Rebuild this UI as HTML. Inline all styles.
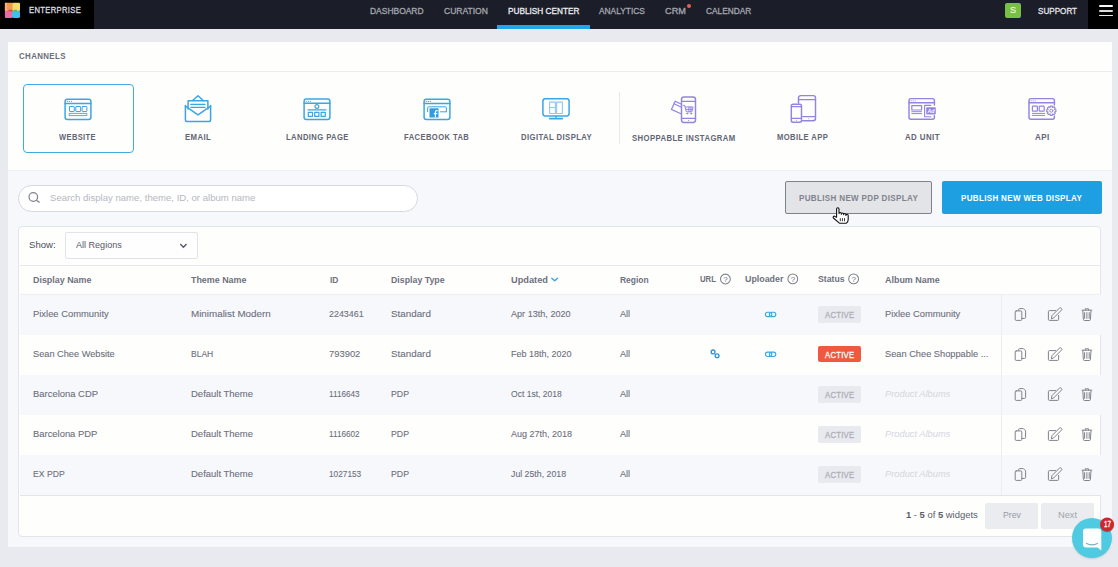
<!DOCTYPE html>
<html><head><meta charset="utf-8">
<style>
*{margin:0;padding:0;box-sizing:border-box}
html,body{width:1118px;height:567px;overflow:hidden;background:#e9e9f0;font-family:"Liberation Sans",sans-serif}
.a{position:absolute}
.t{position:absolute;white-space:nowrap;line-height:1;transform-origin:0 0}
svg{position:absolute;overflow:visible}
</style></head><body>
<!-- header -->
<div class="a" style="left:0;top:0;width:1118px;height:29px;background:#1b1e29"></div>
<div class="a" style="left:0;top:0;width:94px;height:29px;background:#000"></div>
<div class="a" style="left:1088px;top:0;width:30px;height:29px;background:#000"></div>
<!-- logo -->
<svg style="left:0;top:0" width="30" height="29">
 <rect x="4.9" y="2.8" width="8.4" height="8.4" rx="1" fill="#f2994a"/>
 <rect x="4.9" y="2.8" width="2" height="8.4" fill="#f6b088"/>
 <rect x="12.6" y="2.8" width="7.4" height="8.2" rx="1" fill="#f4dd6a"/>
 <rect x="4.9" y="10.8" width="7.6" height="7.1" rx="1" fill="#e96aa6"/>
 <rect x="12" y="10.8" width="8" height="7.1" rx="1.4" fill="#40bfe9"/>
 <rect x="8.6" y="9.8" width="3.6" height="1.6" fill="#e2403f"/>
 <rect x="13.6" y="9.8" width="3.4" height="1.6" fill="#4fb867"/>
</svg>
<div class="a" style="left:497px;top:25px;width:93px;height:3.5px;background:#23a6e6"></div>
<div class="a" style="left:686.5px;top:3.8px;width:4.2px;height:4.2px;border-radius:50%;background:#ef5e4c"></div>
<div class="a" style="left:1005px;top:3px;width:16px;height:15px;border-radius:2px;background:#78bf44"></div>
<span class="t" style="left:1010.1px;top:6.2px;font-size:9.2px;color:#e8f3de;-webkit-text-stroke:.2px #e8f3de">S</span>
<div class="a" style="left:1099px;top:4.9px;width:14.4px;height:2.2px;border-radius:1px;background:#f6f6f6"></div>
<div class="a" style="left:1099px;top:10px;width:14.4px;height:1.8px;border-radius:1px;background:#dcdcdc"></div>
<div class="a" style="left:1099px;top:14.8px;width:14.4px;height:1.6px;border-radius:1px;background:#ececec"></div>

<!-- outer card -->
<div class="a" style="left:8px;top:42px;width:1104px;height:505px;background:#f7f8fb"></div>
<div class="a" style="left:8px;top:42px;width:1104px;height:128px;background:#fefefd"></div>
<div class="a" style="left:8px;top:169.6px;width:1104px;height:1px;background:#eff0f4"></div>
<div class="a" style="left:8px;top:70.5px;width:1104px;height:1px;background:#eceef3"></div>
<div class="a" style="left:22.7px;top:83.8px;width:111.3px;height:69.2px;border:1.8px solid #42a9e2;border-radius:4px"></div>
<div class="a" style="left:619px;top:92px;width:1px;height:52px;background:#e8e9ef"></div>


<!-- search -->
<div class="a" style="left:18.4px;top:185.2px;width:399.2px;height:26.5px;border:1px solid #d6d8e0;border-radius:14px;background:#fff"></div>
<svg style="left:0;top:0" width="1" height="1"><circle cx="33.3" cy="197" r="4.3" fill="none" stroke="#80838e" stroke-width="1.2"/><line x1="36.4" y1="200.2" x2="39.6" y2="202.6" stroke="#80838e" stroke-width="1.3"/></svg>
<!-- buttons -->
<div class="a" style="left:785px;top:181.4px;width:147px;height:32.2px;border:1px solid #7f828b;border-radius:2px;background:#e3e4e8"></div>
<div class="a" style="left:942.2px;top:181.4px;width:160px;height:32.2px;border-radius:2px;background:#1e9fe2"></div>

<!-- table card -->
<div class="a" style="left:18px;top:225.8px;width:1083.4px;height:310.9px;border:1px solid #e3e5eb;border-radius:4px;background:#fefefd"></div>
<div class="a" style="left:19.5px;top:265px;width:1081px;height:1px;background:#e6e8ed"></div>
<div class="a" style="left:65px;top:232px;width:132.6px;height:26.8px;border:1px solid #e1e3e8;border-radius:2px;background:#fefefe"></div>
<svg style="left:0;top:0" width="1" height="1"><polyline points="180.3,244 183.4,247.2 186.5,244" fill="none" stroke="#555965" stroke-width="1.4"/></svg>
<div class="a" style="left:19.5px;top:294.5px;width:1081px;height:40px;background:#f7f8fb"></div>
<div class="a" style="left:19.5px;top:374.5px;width:1081px;height:40px;background:#f7f8fb"></div>
<div class="a" style="left:19.5px;top:454.5px;width:1081px;height:40.5px;background:#f7f8fb"></div>
<div class="a" style="left:19.5px;top:294px;width:1081px;height:1px;background:#edeff3"></div>
<div class="a" style="left:19.5px;top:495px;width:1081px;height:1px;background:#e3e5ea"></div>
<div class="a" style="left:1001px;top:294px;width:1px;height:201px;background:#eceef2"></div>
<!-- badges -->
<div class="a" style="left:818.2px;top:306.3px;width:42.5px;height:16.3px;border-radius:2px;background:#e9eaef"></div>
<div class="a" style="left:818.2px;top:345.9px;width:42.5px;height:16.5px;border-radius:2px;background:#f0593d"></div>
<div class="a" style="left:818.2px;top:386.2px;width:42.5px;height:16.4px;border-radius:2px;background:#e9eaef"></div>
<div class="a" style="left:818.2px;top:426.2px;width:42.5px;height:16.4px;border-radius:2px;background:#e9eaef"></div>
<div class="a" style="left:818.2px;top:466.2px;width:42.5px;height:16.4px;border-radius:2px;background:#e9eaef"></div>
<!-- footer -->
<div class="a" style="left:985.2px;top:503.3px;width:52.6px;height:25.4px;border-radius:2px;background:#ebecf0"></div>
<div class="a" style="left:1040.9px;top:503.3px;width:53px;height:25.4px;border-radius:2px;background:#ebecf0"></div>

<!-- ROWICONS -->
<svg style="left:0;top:0" width="1118" height="567" fill="none" stroke="#80838d" stroke-width="1" stroke-linejoin="round" stroke-linecap="round">
<g transform="translate(0 0)">
 <path d="M1018.6 310.4 V309.6 a1 1 0 0 1 1 -1 H1023.4 L1025.6 310.8 V317.4 a1 1 0 0 1 -1 1 H1021.8"/>
 <path d="M1016.2 310.9 H1020.8 a1 1 0 0 1 1 1 V319.4 a1 1 0 0 1 -1 1 H1016.2 a1 1 0 0 1 -1 -1 V311.9 a1 1 0 0 1 1 -1 Z"/>
 <path d="M1055.6 310.6 H1049.4 a1 1 0 0 0 -1 1 V319.4 a1 1 0 0 0 1 1 H1057.6 a1 1 0 0 0 1 -1 V315.4"/>
 <path d="M1051.4 318.6 L1052 315.6 L1059.6 308 a1 1 0 0 1 1.4 0 L1061.6 308.6 a1 1 0 0 1 0 1.4 L1054 317.6 Z"/>
 <path d="M1082 310.2 H1091.8 M1085.2 310.2 V308.8 H1088.6 V310.2 M1082.8 310.6 L1083.4 319.6 a1 1 0 0 0 1 .9 H1089.4 a1 1 0 0 0 1 -.9 L1091 310.6 M1084.6 312.6 V318.4 M1086.9 312.6 V318.4 M1089.2 312.6 V318.4"/>
</g>
<g transform="translate(0 40)">
 <path d="M1018.6 310.4 V309.6 a1 1 0 0 1 1 -1 H1023.4 L1025.6 310.8 V317.4 a1 1 0 0 1 -1 1 H1021.8"/>
 <path d="M1016.2 310.9 H1020.8 a1 1 0 0 1 1 1 V319.4 a1 1 0 0 1 -1 1 H1016.2 a1 1 0 0 1 -1 -1 V311.9 a1 1 0 0 1 1 -1 Z"/>
 <path d="M1055.6 310.6 H1049.4 a1 1 0 0 0 -1 1 V319.4 a1 1 0 0 0 1 1 H1057.6 a1 1 0 0 0 1 -1 V315.4"/>
 <path d="M1051.4 318.6 L1052 315.6 L1059.6 308 a1 1 0 0 1 1.4 0 L1061.6 308.6 a1 1 0 0 1 0 1.4 L1054 317.6 Z"/>
 <path d="M1082 310.2 H1091.8 M1085.2 310.2 V308.8 H1088.6 V310.2 M1082.8 310.6 L1083.4 319.6 a1 1 0 0 0 1 .9 H1089.4 a1 1 0 0 0 1 -.9 L1091 310.6 M1084.6 312.6 V318.4 M1086.9 312.6 V318.4 M1089.2 312.6 V318.4"/>
</g>
<g transform="translate(0 80)">
 <path d="M1018.6 310.4 V309.6 a1 1 0 0 1 1 -1 H1023.4 L1025.6 310.8 V317.4 a1 1 0 0 1 -1 1 H1021.8"/>
 <path d="M1016.2 310.9 H1020.8 a1 1 0 0 1 1 1 V319.4 a1 1 0 0 1 -1 1 H1016.2 a1 1 0 0 1 -1 -1 V311.9 a1 1 0 0 1 1 -1 Z"/>
 <path d="M1055.6 310.6 H1049.4 a1 1 0 0 0 -1 1 V319.4 a1 1 0 0 0 1 1 H1057.6 a1 1 0 0 0 1 -1 V315.4"/>
 <path d="M1051.4 318.6 L1052 315.6 L1059.6 308 a1 1 0 0 1 1.4 0 L1061.6 308.6 a1 1 0 0 1 0 1.4 L1054 317.6 Z"/>
 <path d="M1082 310.2 H1091.8 M1085.2 310.2 V308.8 H1088.6 V310.2 M1082.8 310.6 L1083.4 319.6 a1 1 0 0 0 1 .9 H1089.4 a1 1 0 0 0 1 -.9 L1091 310.6 M1084.6 312.6 V318.4 M1086.9 312.6 V318.4 M1089.2 312.6 V318.4"/>
</g>
<g transform="translate(0 120)">
 <path d="M1018.6 310.4 V309.6 a1 1 0 0 1 1 -1 H1023.4 L1025.6 310.8 V317.4 a1 1 0 0 1 -1 1 H1021.8"/>
 <path d="M1016.2 310.9 H1020.8 a1 1 0 0 1 1 1 V319.4 a1 1 0 0 1 -1 1 H1016.2 a1 1 0 0 1 -1 -1 V311.9 a1 1 0 0 1 1 -1 Z"/>
 <path d="M1055.6 310.6 H1049.4 a1 1 0 0 0 -1 1 V319.4 a1 1 0 0 0 1 1 H1057.6 a1 1 0 0 0 1 -1 V315.4"/>
 <path d="M1051.4 318.6 L1052 315.6 L1059.6 308 a1 1 0 0 1 1.4 0 L1061.6 308.6 a1 1 0 0 1 0 1.4 L1054 317.6 Z"/>
 <path d="M1082 310.2 H1091.8 M1085.2 310.2 V308.8 H1088.6 V310.2 M1082.8 310.6 L1083.4 319.6 a1 1 0 0 0 1 .9 H1089.4 a1 1 0 0 0 1 -.9 L1091 310.6 M1084.6 312.6 V318.4 M1086.9 312.6 V318.4 M1089.2 312.6 V318.4"/>
</g>
<g transform="translate(0 160)">
 <path d="M1018.6 310.4 V309.6 a1 1 0 0 1 1 -1 H1023.4 L1025.6 310.8 V317.4 a1 1 0 0 1 -1 1 H1021.8"/>
 <path d="M1016.2 310.9 H1020.8 a1 1 0 0 1 1 1 V319.4 a1 1 0 0 1 -1 1 H1016.2 a1 1 0 0 1 -1 -1 V311.9 a1 1 0 0 1 1 -1 Z"/>
 <path d="M1055.6 310.6 H1049.4 a1 1 0 0 0 -1 1 V319.4 a1 1 0 0 0 1 1 H1057.6 a1 1 0 0 0 1 -1 V315.4"/>
 <path d="M1051.4 318.6 L1052 315.6 L1059.6 308 a1 1 0 0 1 1.4 0 L1061.6 308.6 a1 1 0 0 1 0 1.4 L1054 317.6 Z"/>
 <path d="M1082 310.2 H1091.8 M1085.2 310.2 V308.8 H1088.6 V310.2 M1082.8 310.6 L1083.4 319.6 a1 1 0 0 0 1 .9 H1089.4 a1 1 0 0 0 1 -.9 L1091 310.6 M1084.6 312.6 V318.4 M1086.9 312.6 V318.4 M1089.2 312.6 V318.4"/>
</g>
</svg>

<!-- ICONS -->
<svg style="left:0;top:0" width="1118" height="567" fill="none" stroke-linecap="round" stroke-linejoin="round">
<!-- WEBSITE -->
<g stroke="#3ba6e2" stroke-width="1.5">
 <rect x="65.1" y="99.2" width="25.8" height="20.2" rx="2.2"/>
 <line x1="65.1" y1="103.4" x2="90.9" y2="103.4"/>
 <rect x="69.5" y="106.5" width="4.8" height="5" rx=".5" stroke-width="1"/>
 <rect x="75.8" y="106.5" width="4.8" height="5" rx=".5" stroke-width="1"/>
 <rect x="82.1" y="106.5" width="4.8" height="5" rx=".5" stroke-width="1"/>
 <rect x="69.5" y="113.4" width="17.4" height="2.2" stroke-width=".9"/>
</g>
<g fill="#3ba6e2"><circle cx="67.6" cy="101.3" r=".6"/><circle cx="69.6" cy="101.3" r=".6"/><circle cx="71.6" cy="101.3" r=".6"/></g>
<!-- EMAIL -->
<g stroke="#3ba6e2" stroke-width="1.5">
 <path d="M185.4 105.5 V119.8 a1.8 1.8 0 0 0 1.8 1.8 H208.8 a1.8 1.8 0 0 0 1.8 -1.8 V105.5"/>
 <path d="M185.4 106.2 L198 114.8 L210.6 106.2"/>
 <path d="M188.1 109 V100.8 H207.9 V109"/>
 <path d="M192.6 100.5 L198 95.8 L203.2 100.5"/>
 <line x1="190.8" y1="104.4" x2="205" y2="104.4" stroke-width="1.1"/>
 <line x1="190.8" y1="107.4" x2="205" y2="107.4" stroke-width="1.1"/>
</g>
<!-- LANDING PAGE -->
<g stroke="#3ba6e2" stroke-width="1.5">
 <rect x="304.1" y="99" width="25.8" height="20.4" rx="2.2"/>
 <line x1="304.1" y1="103.3" x2="329.9" y2="103.3"/>
 <circle cx="316.9" cy="106.5" r="1.9" stroke-width="1.2"/>
 <line x1="308" y1="109.9" x2="326" y2="109.9" stroke-width="1.1"/>
 <rect x="308.3" y="112.4" width="4.2" height="4" stroke-width="1.2"/>
 <rect x="314.7" y="112.4" width="4.2" height="4" stroke-width="1.2"/>
 <rect x="321.1" y="112.4" width="4.2" height="4" stroke-width="1.2"/>
</g>
<g fill="#3ba6e2"><circle cx="306.3" cy="101.3" r=".6"/><circle cx="308.3" cy="101.3" r=".6"/><circle cx="310.3" cy="101.3" r=".6"/></g>
<!-- FACEBOOK TAB -->
<g stroke="#3ba6e2" stroke-width="1.5">
 <rect x="424.1" y="99.2" width="25.8" height="20.2" rx="2.2"/>
 <line x1="424.1" y1="103.5" x2="449.9" y2="103.5"/>
 <path d="M427.6 111.6 V107.8 a1 1 0 0 1 1 -1 H445.4 a1 1 0 0 1 1 1 V111.6" stroke-width="1"/>
 <line x1="440.5" y1="111.8" x2="446.4" y2="111.8" stroke-width="1"/>
</g>
<g fill="#3ba6e2"><circle cx="426.3" cy="101.4" r=".6"/><circle cx="428.3" cy="101.4" r=".6"/><circle cx="430.3" cy="101.4" r=".6"/>
 <rect x="429.5" y="108.3" width="9" height="9.2" fill="#2f9ce0"/></g>
<path d="M435.4 117.6 V112 a1.4 1.4 0 0 1 1.4 -1.4 h.9 M433.8 113.6 h3.6" stroke="#fff" stroke-width="1.2" stroke-linecap="butt"/>
<!-- DIGITAL DISPLAY -->
<g stroke="#3ba6e2" stroke-width="1.5">
 <rect x="542.9" y="98.8" width="26.2" height="17.2" rx="2.4"/>
 <line x1="549.6" y1="118.6" x2="562.4" y2="118.6" stroke-width="1.6"/>
 <line x1="556" y1="116.4" x2="556" y2="118.2" stroke-width="1.3"/>
</g>
<g stroke="#8cccef" stroke-width="1.1">
 <rect x="549.6" y="102.1" width="5.8" height="5.4"/>
 <rect x="549.6" y="107.5" width="5.8" height="6"/>
 <rect x="556.6" y="102.1" width="5.8" height="11.4"/>
</g>
<!-- SHOPPABLE -->
<g stroke="#9384e0" stroke-width="1.45">
 <rect x="681.5" y="97" width="14" height="25.5" rx="2.4"/>
 <line x1="681.5" y1="101.4" x2="695.5" y2="101.4" stroke-width="1.1"/>
 <line x1="681.5" y1="118.4" x2="695.5" y2="118.4" stroke-width="1.1"/>
 <path d="M680.9 104 L675.2 101.2 L671.4 109.4 L680.9 113.8" stroke-width="1.2"/>
 <line x1="674" y1="103.8" x2="680.9" y2="107.1" stroke-width="1.1"/>
 <path d="M683.2 105.4 h1.5 l1.6 6.4 h5.6 l1.2 -4.8 h-7.9 M685.9 109.4 h6.8 M688.9 107 v4.8 M690.9 107 v4.8" stroke-width="1"/>
 <circle cx="687.2" cy="113.6" r=".55" stroke-width="1"/><circle cx="691.2" cy="113.6" r=".55" stroke-width="1"/>
</g>
<circle cx="688.5" cy="120.5" r=".6" fill="#9384e0"/>
<!-- MOBILE APP -->
<g stroke="#9384e0" stroke-width="1.45">
 <path d="M798.5 103 V97.8 a2.2 2.2 0 0 1 2.2 -2.2 H813.3 a2.2 2.2 0 0 1 2.2 2.2 V118.6 a2.2 2.2 0 0 1 -2.2 2.2 H802.6"/>
 <line x1="798.5" y1="99.6" x2="815.5" y2="99.6" stroke-width="1.1"/>
 <line x1="802.6" y1="116.6" x2="815.5" y2="116.6" stroke-width="1.1"/>
 <rect x="791.3" y="104.2" width="10.2" height="18" rx="1.8"/>
 <line x1="791.3" y1="106.6" x2="801.5" y2="106.6" stroke-width="1.1"/>
 <line x1="791.3" y1="118.4" x2="801.5" y2="118.4" stroke-width="1.1"/>
</g>
<circle cx="808.8" cy="118.8" r=".5" fill="#9384e0"/><circle cx="796.4" cy="120.3" r=".5" fill="#9384e0"/>
<!-- AD UNIT -->
<g stroke="#9384e0" stroke-width="1.45">
 <path d="M934.4 105 V100.6 a2 2 0 0 0 -2 -2 H911 a2 2 0 0 0 -2 2 V117.2 a2 2 0 0 0 2 2 H932.4 a2 2 0 0 0 2 -2 V115.8"/>
 <line x1="909" y1="102.8" x2="934.4" y2="102.8"/>
 <rect x="911.8" y="105.6" width="9.8" height="4.4" stroke-width="1.2"/>
 <line x1="911.8" y1="111.7" x2="921.6" y2="111.7" stroke-width="1"/>
 <line x1="911.8" y1="113.6" x2="921.6" y2="113.6" stroke-width="1"/>
 <path d="M930.8 105.4 H924.6 V116.8 H930.8" stroke-width="1.1"/>
</g>
<g fill="#9384e0"><circle cx="911.2" cy="100.7" r=".55"/><circle cx="913.2" cy="100.7" r=".55"/><circle cx="915.2" cy="100.7" r=".55"/>
 <rect x="926.2" y="107.2" width="9.6" height="7.2" rx=".8"/></g>
<text x="927.4" y="113.1" font-family="Liberation Sans" font-weight="700" font-style="italic" font-size="5.8" fill="#fff" textLength="7" lengthAdjust="spacingAndGlyphs">Ad</text>
<!-- API -->
<g stroke="#9384e0" stroke-width="1.45">
 <path d="M1054.4 105 V100.6 a2 2 0 0 0 -2 -2 H1031 a2 2 0 0 0 -2 2 V117.2 a2 2 0 0 0 2 2 H1052.4 a2 2 0 0 0 2 -2 V116"/>
 <line x1="1029" y1="102.8" x2="1054.4" y2="102.8"/>
 <rect x="1032.4" y="106.2" width="5" height="5" rx=".6" stroke-width="1.2"/>
 <rect x="1039.2" y="106.2" width="5" height="5" rx=".6" stroke-width="1.2"/>
 <line x1="1032.4" y1="113.4" x2="1044.6" y2="113.4" stroke-width="1"/>
 <line x1="1032.4" y1="115.4" x2="1044.6" y2="115.4" stroke-width="1"/>
 <path d="M1055.91 109.77 L1055.91 111.63 L1054.58 111.93 L1054.49 112.14 L1055.22 113.30 L1053.90 114.62 L1052.74 113.89 L1052.53 113.98 L1052.23 115.31 L1050.37 115.31 L1050.07 113.98 L1049.86 113.89 L1048.70 114.62 L1047.38 113.30 L1048.11 112.14 L1048.02 111.93 L1046.69 111.63 L1046.69 109.77 L1048.02 109.47 L1048.11 109.26 L1047.38 108.10 L1048.70 106.78 L1049.86 107.51 L1050.07 107.42 L1050.37 106.09 L1052.23 106.09 L1052.53 107.42 L1052.74 107.51 L1053.90 106.78 L1055.22 108.10 L1054.49 109.26 L1054.58 109.47 Z" stroke-width="1.15" fill="#fdfdfc"/>
 <circle cx="1051.3" cy="110.7" r="1.5" stroke-width="1"/>
</g>
<g fill="#9384e0"><circle cx="1031.2" cy="100.7" r=".55"/><circle cx="1033.2" cy="100.7" r=".55"/><circle cx="1035.2" cy="100.7" r=".55"/></g>

<!-- question circles -->
<g stroke="#7e818b" stroke-width="1.05">
 <circle cx="725.4" cy="279" r="4.9"/><circle cx="792.8" cy="278.9" r="4.9"/><circle cx="853.6" cy="278.9" r="4.9"/>
</g>
<g fill="#6f727d" font-family="Liberation Sans" font-size="8" text-anchor="middle">
 <text x="725.5" y="281.9">?</text><text x="792.9" y="281.8">?</text><text x="853.7" y="281.8">?</text>
</g>
<!-- updated chevron -->
<polyline points="551.8,278.2 554.7,280.8 557.6,278.2" stroke="#3aa3e0" stroke-width="1.4"/>

<!-- link icons -->
<g stroke="#3ea6de" stroke-width="1.1" fill="none">
 <rect x="765.4" y="312.2" width="6.4" height="4.4" rx="2.2"/><rect x="769.4" y="312.2" width="6.4" height="4.4" rx="2.2"/>
 <rect x="765.4" y="352.1" width="6.4" height="4.4" rx="2.2"/><rect x="769.4" y="352.1" width="6.4" height="4.4" rx="2.2"/>
</g>
<g stroke="#2f95d6" stroke-width="1.35" fill="none">
 <circle cx="713.1" cy="351.9" r="1.9"/><circle cx="717.1" cy="355.7" r="1.9"/>
</g>
</svg>



<!-- chat -->
<div class="a" style="left:1072px;top:518.2px;width:40px;height:40px;border-radius:50%;background:#4ecbe1;box-shadow:0 1px 2px rgba(0,0,0,.12)"></div>
<svg style="left:0;top:0" width="1118" height="567">
 <path d="M1086 528.6 H1098.3 a3 3 0 0 1 3 3 V550.6 L1097.6 547.6 H1086 a3 3 0 0 1 -3 -3 V531.6 a3 3 0 0 1 3 -3 Z" fill="#fdfefe"/>
 <path d="M1086.2 543.2 q5.8 3.4 11.6 0" stroke="#7fa9b8" stroke-width="1.1" fill="none"/>
 <circle cx="1107.1" cy="525.2" r="7" fill="#6a2326" opacity=".45"/>
 <circle cx="1107.1" cy="524.4" r="6.9" fill="#d4252b"/>
</svg>
<!-- hand cursor -->
<svg style="left:832.4px;top:207.4px" width="17" height="18">
 <path d="M4.6 10.2 V1.9 a1.2 1.2 0 0 1 2.4 0 V6.6 a1.15 1.15 0 0 1 2.3 0 V7.2 a1.15 1.15 0 0 1 2.3 0 V7.6 a1.15 1.15 0 0 1 2.3 0 V8.4 a1.15 1.15 0 0 1 2.3 0 V12.4 q0 2.2 -1.8 3.8 H7.4 L1.4 11 a1.1 1.1 0 0 1 1.5 -1.6 Z" fill="#fff" stroke="#111" stroke-width="1.1" stroke-linejoin="round"/>
 <path d="M8.3 11.2 V14.2 M10.4 11.2 V14.2 M12.5 11.2 V14.2" stroke="#222" stroke-width="0.9"/>
</svg>
<span class="t" style="left:28.80px;top:6.06px;font-size:8.43px;font-weight:400;color:#dcdce0;transform:scaleX(0.9031);-webkit-text-stroke:0.3px #dcdce0;letter-spacing:0.4px;">ENTERPRISE</span>
<span class="t" style="left:369.80px;top:6.59px;font-size:8.87px;font-weight:400;color:#a4a6ae;transform:scaleX(0.9547);-webkit-text-stroke:0.3px #a4a6ae;">DASHBOARD</span>
<span class="t" style="left:443.50px;top:6.59px;font-size:8.87px;font-weight:400;color:#a4a6ae;transform:scaleX(0.9622);-webkit-text-stroke:0.3px #a4a6ae;">CURATION</span>
<span class="t" style="left:508.00px;top:6.59px;font-size:8.87px;font-weight:400;color:#ececf0;transform:scaleX(0.9293);-webkit-text-stroke:0.3px #ececf0;">PUBLISH CENTER</span>
<span class="t" style="left:599.10px;top:6.59px;font-size:8.87px;font-weight:400;color:#a4a6ae;transform:scaleX(0.9432);-webkit-text-stroke:0.3px #a4a6ae;">ANALYTICS</span>
<span class="t" style="left:665.00px;top:6.59px;font-size:8.87px;font-weight:400;color:#a4a6ae;transform:scaleX(1.0356);-webkit-text-stroke:0.3px #a4a6ae;">CRM</span>
<span class="t" style="left:705.60px;top:6.59px;font-size:8.87px;font-weight:400;color:#a4a6ae;transform:scaleX(0.9363);-webkit-text-stroke:0.3px #a4a6ae;">CALENDAR</span>
<span class="t" style="left:1037.70px;top:6.99px;font-size:8.87px;font-weight:400;color:#e4e4e8;transform:scaleX(0.9155);-webkit-text-stroke:0.3px #e4e4e8;">SUPPORT</span>
<span class="t" style="left:18.80px;top:52.34px;font-size:8.58px;font-weight:700;color:#6a6e7a;transform:scaleX(0.9199);letter-spacing:0.4px;">CHANNELS</span>
<span class="t" style="left:59.30px;top:133.79px;font-size:8.28px;font-weight:700;color:#626673;transform:scaleX(0.9059);letter-spacing:0.45px;">WEBSITE</span>
<span class="t" style="left:185.00px;top:133.79px;font-size:8.28px;font-weight:700;color:#626673;transform:scaleX(0.9394);letter-spacing:0.45px;">EMAIL</span>
<span class="t" style="left:285.90px;top:133.79px;font-size:8.28px;font-weight:700;color:#626673;transform:scaleX(0.9224);letter-spacing:0.45px;">LANDING PAGE</span>
<span class="t" style="left:404.40px;top:133.89px;font-size:8.28px;font-weight:700;color:#626673;transform:scaleX(0.9193);letter-spacing:0.45px;">FACEBOOK TAB</span>
<span class="t" style="left:520.50px;top:133.89px;font-size:8.28px;font-weight:700;color:#626673;transform:scaleX(0.9309);letter-spacing:0.45px;">DIGITAL DISPLAY</span>
<span class="t" style="left:631.60px;top:134.89px;font-size:8.28px;font-weight:700;color:#626673;transform:scaleX(0.9326);letter-spacing:0.45px;">SHOPPABLE INSTAGRAM</span>
<span class="t" style="left:777.00px;top:133.89px;font-size:8.28px;font-weight:700;color:#626673;transform:scaleX(0.9201);letter-spacing:0.45px;">MOBILE APP</span>
<span class="t" style="left:905.10px;top:133.79px;font-size:8.28px;font-weight:700;color:#626673;transform:scaleX(0.9538);letter-spacing:0.45px;">AD UNIT</span>
<span class="t" style="left:1034.80px;top:133.79px;font-size:8.28px;font-weight:700;color:#626673;transform:scaleX(0.9734);letter-spacing:0.45px;">API</span>
<span class="t" style="left:49.90px;top:194.44px;font-size:8.58px;font-weight:400;color:#b5b7c1;transform:scaleX(1.1161);">Search display name, theme, ID, or album name</span>
<span class="t" style="left:798.90px;top:195.19px;font-size:8.28px;font-weight:700;color:#80838c;transform:scaleX(0.9731);letter-spacing:0.35px;">PUBLISH NEW PDP DISPLAY</span>
<span class="t" style="left:961.30px;top:195.19px;font-size:8.28px;font-weight:700;color:#ffffff;transform:scaleX(0.9697);letter-spacing:0.35px;">PUBLISH NEW WEB DISPLAY</span>
<span class="t" style="left:29.00px;top:240.43px;font-size:9.88px;font-weight:400;color:#4a4e5b;transform:scaleX(0.9700);">Show:</span>
<span class="t" style="left:76.00px;top:240.43px;font-size:9.88px;font-weight:400;color:#555966;transform:scaleX(0.9158);">All Regions</span>
<span class="t" style="left:32.90px;top:274.88px;font-size:9.59px;font-weight:700;color:#6e717d;transform:scaleX(0.9297);">Display Name</span>
<span class="t" style="left:191.30px;top:274.88px;font-size:9.59px;font-weight:700;color:#6e717d;transform:scaleX(0.9293);">Theme Name</span>
<span class="t" style="left:329.80px;top:274.88px;font-size:9.59px;font-weight:700;color:#6e717d;transform:scaleX(0.8798);">ID</span>
<span class="t" style="left:390.90px;top:274.88px;font-size:9.59px;font-weight:700;color:#6e717d;transform:scaleX(0.9182);">Display Type</span>
<span class="t" style="left:510.50px;top:274.88px;font-size:9.59px;font-weight:700;color:#6e717d;transform:scaleX(0.9646);">Updated</span>
<span class="t" style="left:619.70px;top:275.08px;font-size:9.59px;font-weight:700;color:#6e717d;transform:scaleX(0.8833);">Region</span>
<span class="t" style="left:699.80px;top:274.28px;font-size:9.59px;font-weight:700;color:#6e717d;transform:scaleX(0.8117);">URL</span>
<span class="t" style="left:744.50px;top:273.78px;font-size:9.59px;font-weight:700;color:#6e717d;transform:scaleX(0.9238);">Uploader</span>
<span class="t" style="left:817.60px;top:273.78px;font-size:9.59px;font-weight:700;color:#6e717d;transform:scaleX(0.9086);">Status</span>
<span class="t" style="left:884.80px;top:275.08px;font-size:9.59px;font-weight:700;color:#6e717d;transform:scaleX(0.9327);">Album Name</span>
<span class="t" style="left:32.50px;top:309.28px;font-size:9.59px;font-weight:400;color:#6c6f7b;transform:scaleX(0.9807);-webkit-text-stroke:0.1px #6c6f7b;">Pixlee Community</span>
<span class="t" style="left:191.00px;top:309.28px;font-size:9.59px;font-weight:400;color:#6c6f7b;transform:scaleX(1.0261);-webkit-text-stroke:0.1px #6c6f7b;">Minimalist Modern</span>
<span class="t" style="left:329.10px;top:309.28px;font-size:9.59px;font-weight:400;color:#6c6f7b;transform:scaleX(0.9307);-webkit-text-stroke:0.1px #6c6f7b;">2243461</span>
<span class="t" style="left:390.60px;top:309.28px;font-size:9.59px;font-weight:400;color:#6c6f7b;transform:scaleX(1.0247);-webkit-text-stroke:0.1px #6c6f7b;">Standard</span>
<span class="t" style="left:510.70px;top:309.28px;font-size:9.59px;font-weight:400;color:#6c6f7b;transform:scaleX(0.9486);-webkit-text-stroke:0.1px #6c6f7b;">Apr 13th, 2020</span>
<span class="t" style="left:619.60px;top:309.28px;font-size:9.59px;font-weight:400;color:#6c6f7b;transform:scaleX(0.9509);-webkit-text-stroke:0.1px #6c6f7b;">All</span>
<span class="t" style="left:825.00px;top:310.69px;font-size:8.87px;font-weight:400;color:#adafb8;transform:scaleX(0.8693);-webkit-text-stroke:0.3px #adafb8;letter-spacing:0.3px;">ACTIVE</span>
<span class="t" style="left:32.50px;top:349.28px;font-size:9.59px;font-weight:400;color:#6c6f7b;transform:scaleX(0.9612);-webkit-text-stroke:0.1px #6c6f7b;">Sean Chee Website</span>
<span class="t" style="left:191.00px;top:349.28px;font-size:9.59px;font-weight:400;color:#6c6f7b;transform:scaleX(0.8883);-webkit-text-stroke:0.1px #6c6f7b;">BLAH</span>
<span class="t" style="left:329.10px;top:349.28px;font-size:9.59px;font-weight:400;color:#6c6f7b;transform:scaleX(0.9799);-webkit-text-stroke:0.1px #6c6f7b;">793902</span>
<span class="t" style="left:390.60px;top:349.28px;font-size:9.59px;font-weight:400;color:#6c6f7b;transform:scaleX(1.0247);-webkit-text-stroke:0.1px #6c6f7b;">Standard</span>
<span class="t" style="left:510.70px;top:349.28px;font-size:9.59px;font-weight:400;color:#6c6f7b;transform:scaleX(0.9390);-webkit-text-stroke:0.1px #6c6f7b;">Feb 18th, 2020</span>
<span class="t" style="left:619.60px;top:349.28px;font-size:9.59px;font-weight:400;color:#6c6f7b;transform:scaleX(0.9509);-webkit-text-stroke:0.1px #6c6f7b;">All</span>
<span class="t" style="left:825.00px;top:350.69px;font-size:8.87px;font-weight:400;color:#ffffff;transform:scaleX(0.8693);-webkit-text-stroke:0.3px #ffffff;letter-spacing:0.3px;">ACTIVE</span>
<span class="t" style="left:32.50px;top:389.28px;font-size:9.59px;font-weight:400;color:#6c6f7b;transform:scaleX(0.9844);-webkit-text-stroke:0.1px #6c6f7b;">Barcelona CDP</span>
<span class="t" style="left:191.00px;top:389.28px;font-size:9.59px;font-weight:400;color:#6c6f7b;transform:scaleX(0.9905);-webkit-text-stroke:0.1px #6c6f7b;">Default Theme</span>
<span class="t" style="left:329.10px;top:389.28px;font-size:9.59px;font-weight:400;color:#6c6f7b;transform:scaleX(0.8554);-webkit-text-stroke:0.1px #6c6f7b;">1116643</span>
<span class="t" style="left:390.60px;top:389.28px;font-size:9.59px;font-weight:400;color:#6c6f7b;transform:scaleX(0.9117);-webkit-text-stroke:0.1px #6c6f7b;">PDP</span>
<span class="t" style="left:510.70px;top:389.28px;font-size:9.59px;font-weight:400;color:#6c6f7b;transform:scaleX(0.8916);-webkit-text-stroke:0.1px #6c6f7b;">Oct 1st, 2018</span>
<span class="t" style="left:619.60px;top:389.28px;font-size:9.59px;font-weight:400;color:#6c6f7b;transform:scaleX(0.9509);-webkit-text-stroke:0.1px #6c6f7b;">All</span>
<span class="t" style="left:825.00px;top:390.69px;font-size:8.87px;font-weight:400;color:#adafb8;transform:scaleX(0.8693);-webkit-text-stroke:0.3px #adafb8;letter-spacing:0.3px;">ACTIVE</span>
<span class="t" style="left:32.50px;top:429.28px;font-size:9.59px;font-weight:400;color:#6c6f7b;transform:scaleX(0.9816);-webkit-text-stroke:0.1px #6c6f7b;">Barcelona PDP</span>
<span class="t" style="left:191.00px;top:429.28px;font-size:9.59px;font-weight:400;color:#6c6f7b;transform:scaleX(0.9905);-webkit-text-stroke:0.1px #6c6f7b;">Default Theme</span>
<span class="t" style="left:329.10px;top:429.28px;font-size:9.59px;font-weight:400;color:#6c6f7b;transform:scaleX(0.8554);-webkit-text-stroke:0.1px #6c6f7b;">1116602</span>
<span class="t" style="left:390.60px;top:429.28px;font-size:9.59px;font-weight:400;color:#6c6f7b;transform:scaleX(0.9117);-webkit-text-stroke:0.1px #6c6f7b;">PDP</span>
<span class="t" style="left:510.70px;top:429.28px;font-size:9.59px;font-weight:400;color:#6c6f7b;transform:scaleX(0.9405);-webkit-text-stroke:0.1px #6c6f7b;">Aug 27th, 2018</span>
<span class="t" style="left:619.60px;top:429.28px;font-size:9.59px;font-weight:400;color:#6c6f7b;transform:scaleX(0.9509);-webkit-text-stroke:0.1px #6c6f7b;">All</span>
<span class="t" style="left:825.00px;top:430.69px;font-size:8.87px;font-weight:400;color:#adafb8;transform:scaleX(0.8693);-webkit-text-stroke:0.3px #adafb8;letter-spacing:0.3px;">ACTIVE</span>
<span class="t" style="left:32.50px;top:469.28px;font-size:9.59px;font-weight:400;color:#6c6f7b;transform:scaleX(0.9009);-webkit-text-stroke:0.1px #6c6f7b;">EX PDP</span>
<span class="t" style="left:191.00px;top:469.28px;font-size:9.59px;font-weight:400;color:#6c6f7b;transform:scaleX(0.9905);-webkit-text-stroke:0.1px #6c6f7b;">Default Theme</span>
<span class="t" style="left:329.10px;top:469.28px;font-size:9.59px;font-weight:400;color:#6c6f7b;transform:scaleX(0.8631);-webkit-text-stroke:0.1px #6c6f7b;">1027153</span>
<span class="t" style="left:390.60px;top:469.28px;font-size:9.59px;font-weight:400;color:#6c6f7b;transform:scaleX(0.9117);-webkit-text-stroke:0.1px #6c6f7b;">PDP</span>
<span class="t" style="left:510.70px;top:469.28px;font-size:9.59px;font-weight:400;color:#6c6f7b;transform:scaleX(0.9140);-webkit-text-stroke:0.1px #6c6f7b;">Jul 25th, 2018</span>
<span class="t" style="left:619.60px;top:469.28px;font-size:9.59px;font-weight:400;color:#6c6f7b;transform:scaleX(0.9509);-webkit-text-stroke:0.1px #6c6f7b;">All</span>
<span class="t" style="left:825.00px;top:470.69px;font-size:8.87px;font-weight:400;color:#adafb8;transform:scaleX(0.8693);-webkit-text-stroke:0.3px #adafb8;letter-spacing:0.3px;">ACTIVE</span>
<span class="t" style="left:884.80px;top:309.52px;font-size:9.30px;font-weight:400;color:#6c6f7b;transform:scaleX(1.0044);-webkit-text-stroke:0.1px #6c6f7b;">Pixlee Community</span>
<span class="t" style="left:884.80px;top:349.52px;font-size:9.30px;font-weight:400;color:#6c6f7b;transform:scaleX(0.9950);-webkit-text-stroke:0.1px #6c6f7b;">Sean Chee Shoppable ...</span>
<span class="t" style="left:885.30px;top:390.12px;font-size:8.72px;font-weight:400;color:#d5d6dd;transform:scaleX(1.0678);font-style:italic;">Product Albums</span>
<span class="t" style="left:885.30px;top:430.12px;font-size:8.72px;font-weight:400;color:#d5d6dd;transform:scaleX(1.0678);font-style:italic;">Product Albums</span>
<span class="t" style="left:885.30px;top:470.12px;font-size:8.72px;font-weight:400;color:#d5d6dd;transform:scaleX(1.0678);font-style:italic;">Product Albums</span>
<span class="t" style="left:905.90px;top:510.87px;font-size:9.01px;font-weight:400;color:#5a5e6b;transform:scaleX(1.0458);"><b>1</b> - <b>5</b> of <b>5</b> widgets</span>
<span class="t" style="left:1002.60px;top:510.85px;font-size:9.16px;font-weight:400;color:#989aa4;transform:scaleX(0.9519);">Prev</span>
<span class="t" style="left:1057.50px;top:510.85px;font-size:9.16px;font-weight:400;color:#a2a4ad;transform:scaleX(1.0127);">Next</span>
<span class="t" style="left:1103.60px;top:519.86px;font-size:8.43px;font-weight:400;color:#ffffff;transform:scaleX(0.7435);-webkit-text-stroke:0.3px #ffffff;">17</span>
</body></html>
